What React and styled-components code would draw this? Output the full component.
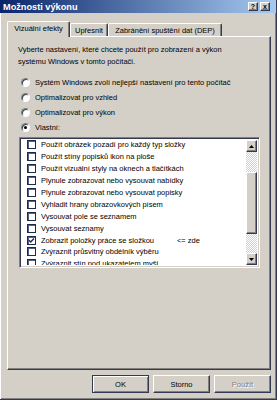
import React from 'react'
import styled, { createGlobalStyle, css } from 'styled-components';

const GlobalStyle = createGlobalStyle`
    * { box-sizing: border-box; }
    html, body { margin: 0; padding: 0; background: #d4d0c8; overflow: hidden; }
    body {
        font-family: "Liberation Sans", Arial, sans-serif;
        font-size: 7.5px;
        color: #000;
    }
`;

const DARK = '#343a52';
const SHADOW = '#808080';

const raised = css`
    border-top: 1px solid #fff;
    border-left: 1px solid #fff;
    border-right: 1px solid ${DARK};
    border-bottom: 1px solid ${DARK};
    box-shadow: inset -1px -1px ${SHADOW};
`;

const Window = styled.div`
    width: 277px;
    height: 400px;
    background: #d4d0c8;
    display: flex;
    flex-direction: column;
    border-right: 1px solid ${DARK};
    border-bottom: 1px solid ${DARK};
    box-shadow: inset 1px 0 #fff, inset -1px -1px ${SHADOW};
`;

const TitleBar = styled.div`
    height: 13px;
    background: linear-gradient(to right, #0a246a, #a6caf0);
    display: flex;
    align-items: center;
    justify-content: space-between;
    padding: 0 6px 0 3px;
`;

const Title = styled.span`
    color: #fff;
    font-weight: bold;
    font-size: 9.2px;
`;

const TitleButtons = styled.div`
    display: flex;
    gap: 2px;
`;

const TitleButton = styled.div`
    width: 10px;
    height: 9px;
    background: #d4d0c8;
    ${raised};
    display: flex;
    align-items: center;
    justify-content: center;
    font-size: 7px;
    font-weight: bold;
    line-height: 1;
`;

const Body = styled.div`
    flex: 1;
    display: flex;
    flex-direction: column;
    padding: 8px 5px 0 7px;
`;

const TabStrip = styled.div`
    display: flex;
    align-items: flex-end;
    height: 15px;
    position: relative;
    z-index: 1;
`;

const Tab = styled.div`
    width: ${p => p.w}px;
    height: ${p => (p.active ? 16 : 13)}px;
    margin-bottom: ${p => (p.active ? -1 : 0)}px;
    background: #d4d0c8;
    border-top: 1px solid #fff;
    border-left: 1px solid #fff;
    border-right: 1px solid ${DARK};
    border-radius: 2px 2px 0 0;
    box-shadow: inset -1px 0 ${SHADOW};
    display: flex;
    align-items: center;
    justify-content: center;
    white-space: nowrap;
    padding-bottom: ${p => (p.active ? 2 : 0)}px;
`;

const Panel = styled.div`
    height: 334px;
    background: #d4d0c8;
    border-top: 1px solid #fff;
    border-left: 1px solid #fff;
    border-right: 1px solid ${DARK};
    border-bottom: 1px solid ${DARK};
    box-shadow: inset -1px -1px ${SHADOW};
    padding: 7px 10px 0 10px;
    display: flex;
    flex-direction: column;
`;

const Intro = styled.p`
    margin: 0;
    line-height: 12px;
    white-space: nowrap;
`;

const RadioGroup = styled.div`
    margin-top: 7px;
    display: flex;
    flex-direction: column;
`;

const RadioRow = styled.label`
    height: 15px;
    display: flex;
    align-items: center;
    gap: 5px;
    padding-left: 3px;
    white-space: nowrap;
`;

const Radio = styled.span`
    width: 9px;
    height: 9px;
    border-radius: 50%;
    background: #fff;
    border: 1px solid ${SHADOW};
    border-right-color: #fff;
    border-bottom-color: #fff;
    box-shadow: inset 1px 1px ${DARK};
    display: flex;
    align-items: center;
    justify-content: center;

    &::after {
        content: '';
        width: 3px;
        height: 3px;
        border-radius: 50%;
        background: ${p => (p.checked ? '#000' : 'transparent')};
    }
`;

const ListBox = styled.div`
    margin-top: 2px;
    margin-left: 1px;
    width: 241px;
    height: 131px;
    background: #fff;
    border-top: 1px solid ${SHADOW};
    border-left: 1px solid ${SHADOW};
    border-right: 1px solid #fff;
    border-bottom: 1px solid #fff;
    box-shadow: inset 1px 1px ${DARK}, inset -1px -1px #d4d0c8;
    padding: 1px 2px 2px 2px;
    display: flex;
    overflow: hidden;
`;

const Items = styled.div`
    flex: 1;
    overflow: hidden;
`;

const Item = styled.div`
    height: 11.9px;
    display: flex;
    align-items: center;
    gap: 5px;
    padding-left: 5px;
    white-space: nowrap;
`;

const Check = styled.span`
    width: 9px;
    height: 9px;
    flex: none;
    background: #fff;
    border: 1px solid #1e2849;
    box-shadow: inset 1px 1px #5a6080;
    display: flex;
    align-items: center;
    justify-content: center;
`;

const Note = styled.span`
    margin-left: 18px;
`;

const ScrollBar = styled.div`
    width: 11px;
    margin-top: 1px;
    display: flex;
    flex-direction: column;
`;

const ScrollButton = styled.div`
    height: 12px;
    flex: none;
    background: #d4d0c8;
    ${raised};
    display: flex;
    align-items: center;
    justify-content: center;
`;

const Track = styled.div`
    height: ${p => p.h}px;
    flex: none;
    background-color: #fff;
    background-image: repeating-conic-gradient(#d4d0c8 0 25%, #fff 0 50%);
    background-size: 2px 2px;
`;

const Thumb = styled.div`
    flex: 1;
    background: #d4d0c8;
    ${raised};
`;

const ButtonRow = styled.div`
    display: flex;
    justify-content: flex-end;
    gap: 4px;
    margin-top: 5px;
`;

const Button = styled.div`
    width: 57px;
    height: 18px;
    background: #d4d0c8;
    display: flex;
    align-items: center;
    justify-content: center;
    border-top: 1px solid #fff;
    border-left: 1px solid #fff;
    border-right: 1px solid ${DARK};
    border-bottom: 1px solid ${DARK};
    box-shadow: inset -1px -1px ${SHADOW};
    ${p => p.primary && css`
        outline: 1px solid ${DARK};
        outline-offset: -1px;
        border-top-color: ${DARK};
        border-left-color: ${DARK};
        box-shadow: inset 1px 1px #fff, inset -1px -1px ${SHADOW};
    `}
    ${p => p.disabled && css`
        color: #808080;
        text-shadow: 1px 1px #fff;
    `}
`;

const Arrow = ({ down }) => (
    <svg width="5" height="3" viewBox="0 0 5 3">
        <path d={down ? 'M0 0H5L2.5 3Z' : 'M0 3H5L2.5 0Z'} fill="#000" />
    </svg>
);

const CheckMark = () => (
    <svg width="7" height="7" viewBox="0 0 7 7">
        <path d="M1 3.2L2.7 5L6 1.6" stroke="#1e2849" strokeWidth="1.4" fill="none" />
    </svg>
);

const options = [
    'Systém Windows zvolí nejlepší nastavení pro tento počítač',
    'Optimalizovat pro vzhled',
    'Optimalizovat pro výkon',
    'Vlastní:',
];

const effects = [
    'Použít obrázek pozadí pro každý typ složky',
    'Použít stíny popisků ikon na ploše',
    'Použít vizuální styly na oknech a tlačítkách',
    'Plynule zobrazovat nebo vysouvat nabídky',
    'Plynule zobrazovat nebo vysouvat popisky',
    'Vyhladit hrany obrazovkových písem',
    'Vysouvat pole se seznamem',
    'Vysouvat seznamy',
    'Zobrazit položky práce se složkou',
    'Zvýraznit průsvitný obdélník výběru',
    'Zvýraznit stín pod ukazatelem myši',
];

const App = () => {
    return (
        <Window>
            <GlobalStyle />
            <TitleBar>
                <Title>Možnosti výkonu</Title>
                <TitleButtons>
                    <TitleButton>?</TitleButton>
                    <TitleButton>x</TitleButton>
                </TitleButtons>
            </TitleBar>
            <Body>
                <TabStrip>
                    <Tab w={63} active>Vizuální efekty</Tab>
                    <Tab w={38}>Upřesnit</Tab>
                    <Tab w={114}>Zabránění spuštění dat (DEP)</Tab>
                </TabStrip>
                <Panel>
                    <Intro>
                        Vyberte nastavení, které chcete použít pro zobrazení a výkon
                        <br />
                        systému Windows v tomto počítači.
                    </Intro>
                    <RadioGroup>
                        {options.map((o, i) => (
                            <RadioRow key={o}>
                                <Radio checked={i === 3} />
                                {o}
                            </RadioRow>
                        ))}
                    </RadioGroup>
                    <ListBox>
                        <Items>
                            {effects.map((e, i) => (
                                <Item key={e}>
                                    <Check>{i === 8 && <CheckMark />}</Check>
                                    {e}
                                    {i === 8 && <Note>&lt;= zde</Note>}
                                </Item>
                            ))}
                        </Items>
                        <ScrollBar>
                            <ScrollButton><Arrow /></ScrollButton>
                            <Track h={20} />
                            <Thumb />
                            <Track h={19} />
                            <ScrollButton><Arrow down /></ScrollButton>
                        </ScrollBar>
                    </ListBox>
                </Panel>
                <ButtonRow>
                    <Button primary>OK</Button>
                    <Button>Storno</Button>
                    <Button disabled>Použít</Button>
                </ButtonRow>
            </Body>
        </Window>
    )
};

export default App
